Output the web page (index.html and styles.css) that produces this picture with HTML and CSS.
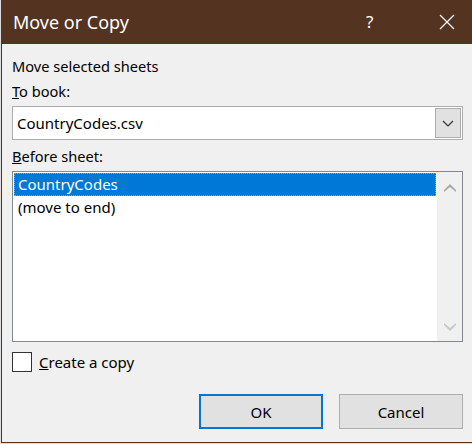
FILE: index.html
```html
<!DOCTYPE html>
<html>
<head>
<meta charset="utf-8">
<link rel="stylesheet" href="styles.css">
</head>
<body>
<div class="window">
  <div class="titlebar">
    <span class="title">Move or Copy</span>
    <span class="help">?</span>
    <span class="close">
      <svg width="16" height="16" viewBox="0 0 16 16"><path d="M1 1 L15 15 M15 1 L1 15" stroke="#fff" stroke-width="1.2" fill="none"/></svg>
    </span>
  </div>
  <div class="content">
    <div class="label">Move selected sheets</div>
    <div class="label"><u>T</u>o book:</div>
    <div class="combo">
      <span class="combo-text">CountryCodes.csv</span>
      <span class="combo-btn">
        <svg width="12" height="7" viewBox="0 0 12 7"><path d="M1 1 L6 6 L11 1" stroke="#333" stroke-width="1.2" fill="none"/></svg>
      </span>
    </div>
    <div class="label"><u>B</u>efore sheet:</div>
    <div class="listbox">
      <div class="items">
        <div class="item selected">CountryCodes</div>
        <div class="item">(move to end)</div>
      </div>
      <div class="scrollbar">
        <svg class="arrow" width="12" height="9" viewBox="0 0 12 9"><path d="M0 7 L6 1 L12 7 L12 9 L6 4 L0 9 Z" fill="#a8a8a8"/></svg>
        <svg class="arrow" width="12" height="9" viewBox="0 0 12 9"><path d="M0 2 L6 8 L12 2 L12 0 L6 5 L0 0 Z" fill="#c8c8c8"/></svg>
      </div>
    </div>
    <label class="check">
      <span class="box"></span>
      <span class="check-text"><u>C</u>reate a copy</span>
    </label>
    <div class="buttons">
      <button class="btn default">OK</button>
      <button class="btn">Cancel</button>
    </div>
  </div>
</div>
</body>
</html>
```
FILE: styles.css
```css
html, body {
  margin: 0;
  padding: 0;
}
body {
  background: #dcdcdc;
  width: 472px;
  height: 444px;
  overflow: hidden;
  font-family: "Noto Sans", "Open Sans", sans-serif;
  font-size: 14.6px;
  color: #000;
}
.window {
  margin-left: 1px;
  height: 442px;
  border-left: 1px solid #553322;
  border-bottom: 1px solid #553322;
  background: #f0f0f0;
  display: flex;
  flex-direction: column;
}
.titlebar {
  height: 44px;
  flex: none;
  background: #553321;
  color: #fff;
  display: flex;
  align-items: center;
  padding-left: 11px;
  font-size: 18px;
}
.title {
  flex: 1;
  padding-bottom: 1px;
}
.help {
  width: 14px;
  font-size: 17px;
  margin-right: 59px;
  padding-bottom: 2px;
}
.close {
  display: flex;
  width: 33px;
  padding-bottom: 1px;
}
.content {
  padding: 12px 9px 0 10px;
  display: flex;
  flex-direction: column;
  flex: 1;
}
.label {
  height: 20px;
  line-height: 20px;
  margin-bottom: 5px;
}
.label + .label {
  margin-bottom: 5px;
}
.combo {
  height: 32px;
  border: 1px solid #adadad;
  background: #fff;
  display: flex;
  align-items: center;
  margin-bottom: 6px;
}
.combo-text {
  flex: 1;
  padding-left: 4px;
  font-size: 15px;
}
.combo-btn {
  width: 24px;
  height: 28px;
  margin-right: 1px;
  border: 1px solid #adadad;
  background: #e1e1e1;
  display: flex;
  align-items: center;
  justify-content: center;
}
.listbox {
  height: 169px;
  border: 1px solid #828790;
  background: #fff;
  display: flex;
  margin-bottom: 10px;
}
.items {
  flex: 1;
  padding: 1px 1px 0 1px;
}
.item {
  height: 21px;
  line-height: 21px;
  padding-left: 3px;
  border: 1px solid transparent;
  font-size: 15px;
}
.item.selected {
  background: #0078d7;
  color: #fff;
  border: 1px dotted #f28c28;
}
.scrollbar {
  width: 25px;
  background: #f0f0f0;
  display: flex;
  flex-direction: column;
  justify-content: space-between;
  align-items: center;
  padding: 11px 0 9px;
}
.check {
  display: flex;
  align-items: center;
  height: 20px;
}
.box {
  width: 18px;
  height: 18px;
  border: 1px solid #333;
  background: #fff;
  margin-right: 7px;
}
.check-text {
  font-size: 15px;
}
.buttons {
  display: flex;
  justify-content: flex-end;
  gap: 16px;
  margin-top: 22px;
}
.btn {
  width: 124px;
  height: 35px;
  background: #e1e1e1;
  border: 1px solid #adadad;
  font-family: inherit;
  font-size: 15px;
  color: #000;
  padding: 0;
}
.btn.default {
  border: 2px solid #0078d7;
}
```
